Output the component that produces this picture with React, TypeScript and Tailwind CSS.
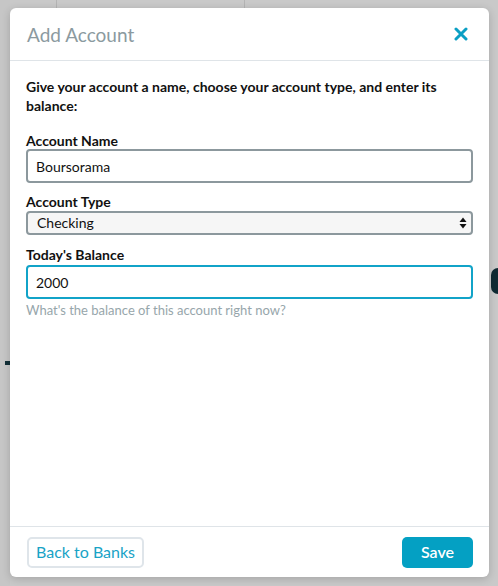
import React, { useState } from 'react';

const font = { fontFamily: 'Lato, "Open Sans", Arial, sans-serif' };

function CloseIcon() {
  return (
    <svg width="14" height="14" viewBox="0 0 14 14" aria-hidden="true">
      <path d="M2 2 L12 12 M12 2 L2 12" stroke="#0b9fc4" strokeWidth="3" strokeLinecap="round" />
    </svg>
  );
}

function SelectArrows() {
  return (
    <svg width="8" height="12" viewBox="0 0 8 12" aria-hidden="true">
      <path d="M4 0.5 L7.5 5 L0.5 5 Z" fill="#111" />
      <path d="M4 11.5 L7.5 7 L0.5 7 Z" fill="#111" />
    </svg>
  );
}

export default function App() {
  const [name, setName] = useState('Boursorama');
  const [type, setType] = useState('Checking');
  const [balance, setBalance] = useState('2000');

  return (
    <div className="relative w-[498px] h-[586px] overflow-hidden bg-[#c9c9c9] pt-[8px] pl-[10px]" style={font}>
      {/* background page bits */}
      <div className="absolute left-[56px] top-0 h-[8px] w-px bg-[#b4b4b4]" />
      <div className="absolute left-[244px] top-0 h-[8px] w-px bg-[#b4b4b4]" />
      <div className="absolute left-0 top-0 h-full w-[10px] bg-[#c6c6c6]" />
      <div className="absolute left-[491px] top-[268px] h-[26px] w-[7px] rounded-l-full bg-[#0f2a33]" />
      <div className="absolute left-[5px] top-[361px] h-[4px] w-[5px] bg-[#123038]" />

      <div className="relative flex h-[569px] w-[479px] flex-col rounded-[6px] bg-white shadow-[0_2px_8px_rgba(0,0,0,0.18)]">
        <div className="flex h-[53px] items-center justify-between border-b border-[#dfe4e8] pl-[17px] pr-[21px]">
          <h2 className="mt-[2px] text-[19px] text-[#8b9aa0]">Add Account</h2>
          <button className="flex items-center">
            <CloseIcon />
          </button>
        </div>

        <div className="flex-1 px-[16px] pt-[16px]">
          <p className="text-[14px] font-bold leading-[19px] text-[#111]">
            Give your account a name, choose your account type, and enter its balance:
          </p>

          <label className="mt-[17px] block text-[14px] font-bold leading-[17px] text-[#111]">Account Name</label>
          <input
            value={name}
            onChange={(e) => setName(e.target.value)}
            className="block h-[34px] w-full rounded-[4px] border-2 border-[#8c989d] px-[8px] text-[14px] text-[#111] outline-none"
          />

          <label className="mt-[9px] block text-[14px] font-bold leading-[19px] text-[#111]">Account Type</label>
          <div className="relative">
            <select
              value={type}
              onChange={(e) => setType(e.target.value)}
              className="block h-[24px] w-full appearance-none rounded-[4px] border-2 border-[#8c989d] bg-[#f6f6f6] px-[9px] text-[14px] leading-[20px] text-[#111] outline-none"
            >
              <option>Checking</option>
              <option>Savings</option>
              <option>Credit Card</option>
            </select>
            <span className="pointer-events-none absolute right-[6px] top-[6px] flex">
              <SelectArrows />
            </span>
          </div>

          <label className="mt-[10px] block text-[14px] font-bold leading-[20px] text-[#111]">Today&apos;s Balance</label>
          <input
            value={balance}
            onChange={(e) => setBalance(e.target.value)}
            className="block h-[34px] w-full rounded-[4px] border-2 border-[#11a3c8] px-[8px] text-[14px] text-[#111] outline-none"
          />
          <p className="mt-[2px] text-[13px] leading-[18px] text-[#97a6ab]">
            What&apos;s the balance of this account right now?
          </p>
        </div>

        <div className="flex h-[51px] items-center justify-between border-t border-[#dfe4e8] pl-[17px] pr-[16px]">
          <button className="h-[31px] rounded-[5px] border-2 border-[#dfe5ea] px-[7px] text-[16px] text-[#19a3c6]">
            Back to Banks
          </button>
          <button className="h-[31px] w-[71px] rounded-[5px] bg-[#04a0c3] text-[16px] font-semibold text-white">
            Save
          </button>
        </div>
      </div>
    </div>
  );
}
